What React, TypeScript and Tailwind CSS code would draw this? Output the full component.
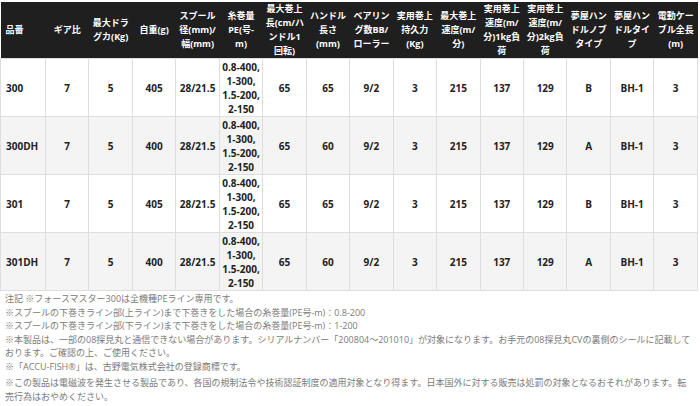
const headers: string[][] = [
  ['品番'],
  ['ギア比'],
  ['最大ドラ', 'グカ(Kg)'],
  ['自重(g)'],
  ['スプール', '径(mm)/', '幅(mm)'],
  ['糸巻量', 'PE(号-', 'm)'],
  ['最大巻上', '長(cm/ハ', 'ンドル1', '回転)'],
  ['ハンドル', '長さ', '(mm)'],
  ['ベアリン', 'グ数BB/', 'ローラー'],
  ['実用巻上', '持久力', '(Kg)'],
  ['最大巻上', '速度(m/', '分)'],
  ['実用巻上', '速度(m/', '分)1kg負', '荷'],
  ['実用巻上', '速度(m/', '分)2kg負', '荷'],
  ['夢屋ハン', 'ドルノブ', 'タイプ'],
  ['夢屋ハン', 'ドルタイ', 'プ'],
  ['電動ケー', 'ブル全長', '(m)'],
]

const pe = ['0.8-400,', '1-300,', '1.5-200,', '2-150']

const rows = [
  { name: '300', weight: '405', handle: '65', knob: 'B' },
  { name: '300DH', weight: '400', handle: '60', knob: 'A' },
  { name: '301', weight: '405', handle: '65', knob: 'B' },
  { name: '301DH', weight: '400', handle: '60', knob: 'A' },
]

const notes = [
  '注記 ※フォースマスター300は全機種PEライン専用です。',
  '※スプールの下巻きライン部(上ライン)まで下巻きをした場合の糸巻量(PE号-m)：0.8-200',
  '※スプールの下巻きライン部(下ライン)まで下巻きをした場合の糸巻量(PE号-m)：1-200',
  '※本製品は、一部の08探見丸と通信できない場合があります。シリアルナンバー「200804～201010」が対象になります。お手元の08探見丸CVの裏側のシールに記載して',
  'おります。ご確認の上、ご使用ください。',
  '※「ACCU-FISH®」は、古野電気株式会社の登録商標です。',
]

export default function App() {
  return (
    <div
      className="w-[700px] h-[406px] overflow-hidden bg-white pt-[2px]"
      style={{ fontFamily: '"Open Sans", "Noto Sans CJK JP", sans-serif' }}
    >
      <table className="table-fixed w-[698px] border-collapse">
        <colgroup>
          <col className="w-[45px]" />
          {headers.slice(1).map((_, i) => (
            <col key={i} />
          ))}
        </colgroup>
        <thead>
          <tr className="bg-[#1f1f1f] h-[56px]">
            {headers.map((h, i) => (
              <th
                key={i}
                className={`px-[3px] py-0 align-middle text-white font-bold text-[9px] leading-[14px] whitespace-nowrap ${
                  i === 0 ? 'text-left pl-[5px]' : 'text-center'
                }`}
              >
                {h.map((line, j) => (
                  <div key={j}>{line}</div>
                ))}
              </th>
            ))}
          </tr>
        </thead>
        <tbody>
          {rows.map((r, i) => {
            const cells = [
              '7',
              '5',
              r.weight,
              '28/21.5',
              'PE',
              '65',
              r.handle,
              '9/2',
              '3',
              '215',
              '137',
              '129',
              r.knob,
              'BH-1',
              '3',
            ]
            return (
              <tr key={r.name} className={i % 2 === 1 ? 'bg-[#f4f4f4]' : 'bg-white'}>
                <td className="border border-[#dedede] h-[58px] pl-[5px] py-0 text-left text-[10px] font-bold text-[#222] leading-[14px]">
                  {r.name}
                </td>
                {cells.map((c, j) => (
                  <td
                    key={j}
                    className="border border-[#dedede] h-[58px] px-0 py-0 text-center align-middle text-[10px] font-bold text-[#222] leading-[14px]"
                  >
                    {c === 'PE'
                      ? pe.map((l) => <div key={l}>{l}</div>)
                      : c}
                  </td>
                ))}
              </tr>
            )
          })}
        </tbody>
      </table>

      <div className="pl-[5px] pt-[1px] text-[9px] leading-[13.6px] text-[#7a7a7a] whitespace-nowrap">
        {notes.map((n) => (
          <div key={n}>{n}</div>
        ))}
        <div className="mt-[2.4px]">
          ※この製品は電磁波を発生させる製品であり、各国の規制法令や技術認証制度の適用対象となり得ます。日本国外に対する販売は処罰の対象となるおそれがあります。転
        </div>
        <div>売行為はおやめください。</div>
      </div>
    </div>
  )
}
